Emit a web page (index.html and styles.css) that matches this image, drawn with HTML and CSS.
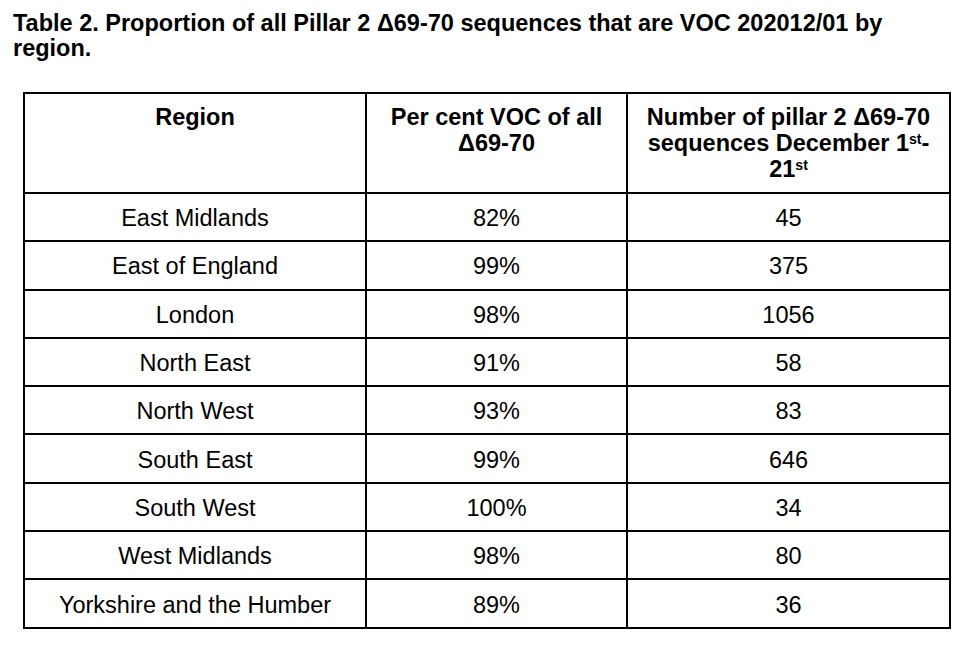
FILE: index.html
```html
<!DOCTYPE html>
<html>
<head>
<meta charset="utf-8">
<link rel="stylesheet" href="styles.css">
</head>
<body>
<div class="page">
  <h1 class="title">Table 2. Proportion of all Pillar 2 Δ69-70 sequences that are VOC 202012/01 by region.</h1>
  <table class="data">
    <colgroup>
      <col class="c1"><col class="c2"><col class="c3">
    </colgroup>
    <thead>
      <tr>
        <th>Region</th>
        <th>Per cent VOC of all<br>Δ69-70</th>
        <th>Number of pillar 2 Δ69-70<br>sequences December 1<sup>st</sup>-<br>21<sup>st</sup></th>
      </tr>
    </thead>
    <tbody>
      <tr><td>East Midlands</td><td>82%</td><td>45</td></tr>
      <tr><td>East of England</td><td>99%</td><td>375</td></tr>
      <tr><td>London</td><td>98%</td><td>1056</td></tr>
      <tr><td>North East</td><td>91%</td><td>58</td></tr>
      <tr><td>North West</td><td>93%</td><td>83</td></tr>
      <tr><td>South East</td><td>99%</td><td>646</td></tr>
      <tr><td>South West</td><td>100%</td><td>34</td></tr>
      <tr><td>West Midlands</td><td>98%</td><td>80</td></tr>
      <tr><td>Yorkshire and the Humber</td><td>89%</td><td>36</td></tr>
    </tbody>
  </table>
</div>
</body>
</html>
```

FILE: styles.css
```css
html, body {
  margin: 0;
  padding: 0;
  background: #ffffff;
}
body {
  font-family: "Liberation Sans", Arial, sans-serif;
  color: #000000;
}
.page {
  padding: 11px 0 0 13px;
}
.title {
  margin: 0;
  width: 900px;
  font-size: 23.5px;
  font-weight: bold;
  line-height: 25px;
}
.data {
  margin: 31px 0 0 10px;
  border-collapse: collapse;
  table-layout: fixed;
  width: 926px;
  font-size: 23.5px;
}
.c1 { width: 342px; }
.c2 { width: 261px; }
.c3 { width: 323px; }
.data th, .data td {
  border: 2px solid #000000;
  text-align: center;
  padding: 0;
}
.data th {
  height: 100px;
  vertical-align: top;
  padding-top: 10px;
  line-height: 26px;
  font-weight: bold;
  box-sizing: border-box;
}
.data td {
  height: 43.3px;
  padding-top: 3px;
  vertical-align: middle;
}
.data sup {
  font-size: 14px;
  line-height: 0;
  vertical-align: 7px;
}
```
